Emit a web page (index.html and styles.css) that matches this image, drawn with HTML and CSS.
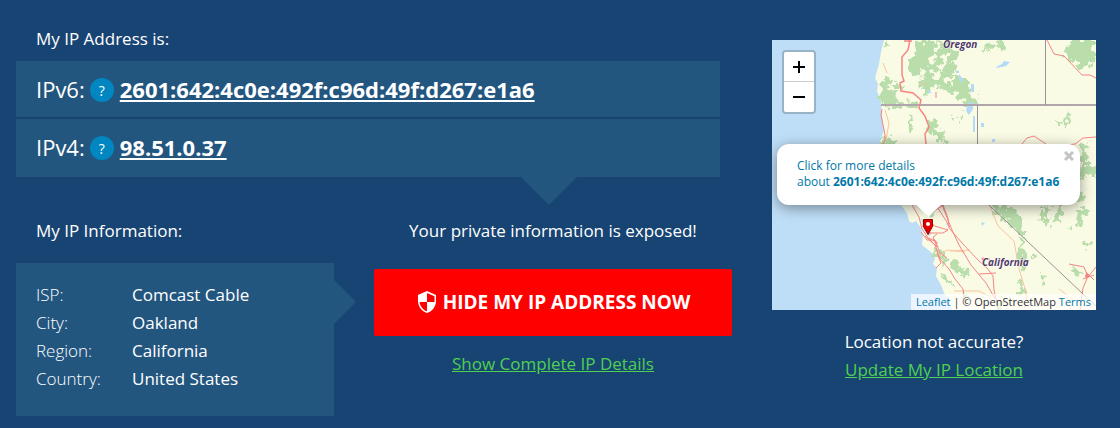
FILE: index.html
```html
<!DOCTYPE html>
<html lang="en">
<head>
    <meta charset="UTF-8">
    <meta name="viewport" content="width=device-width, initial-scale=1.0">
    <title>What Is My IP Address</title>
    <link rel="stylesheet" href="styles.css">
</head>
<body>
    <div class="container">
        <div class="main">
            <h1 class="heading">My IP Address is:</h1>
            <div class="ip-box">
                <div class="ip-row">
                    <span class="ip-label">IPv6:</span>
                    <button class="help" type="button">?</button>
                    <a class="ip" href="#ipv6">2601:642:4c0e:492f:c96d:49f:d267:e1a6</a>
                </div>
                <div class="ip-row">
                    <span class="ip-label">IPv4:</span>
                    <button class="help" type="button">?</button>
                    <a class="ip" href="#ipv4">98.51.0.37</a>
                </div>
            </div>
            <div class="columns">
                <div class="info">
                    <h2 class="heading">My IP Information:</h2>
                    <div class="info-box">
                        <table class="info-table">
                            <tr><th scope="row">ISP:</th><td>Comcast Cable</td></tr>
                            <tr><th scope="row">City:</th><td>Oakland</td></tr>
                            <tr><th scope="row">Region:</th><td>California</td></tr>
                            <tr><th scope="row">Country:</th><td>United States</td></tr>
                        </table>
                    </div>
                </div>
                <div class="action">
                    <p class="heading">Your private information is exposed!</p>
                    <button class="hide-btn" type="button">
                        <svg class="shield" viewBox="0 0 18 22">
                            <path fill="#fff" d="M9 0L0 4v6c0 5.500 3.800 10.600 9 12 5.200-1.400 9-6.500 9-12V4z"/>
                            <path fill="#f00" d="M9 2l7.500 3.300V11H9zM9 11v9.300C5 19 2.200 15.400 1.500 11z"/>
                        </svg>
                        HIDE MY IP ADDRESS NOW
                    </button>
                    <a class="green-link" href="#details">Show Complete IP Details</a>
                </div>
            </div>
        </div>
        <div class="side">
            <div class="map">
                <svg class="map-tiles" viewBox="0 0 324 270" preserveAspectRatio="xMidYMid slice">
                    <filter id="ragged" x="0" y="0" width="100%" height="100%" filterUnits="userSpaceOnUse">
                        <feTurbulence type="fractalNoise" baseFrequency="0.16" numOctaves="3" seed="4"/>
                        <feDisplacementMap in="SourceGraphic" scale="14" xChannelSelector="R" yChannelSelector="G"/>
                    </filter>
                    <rect width="324" height="270" fill="#bedef7"/>
                    <!-- land -->
                    <path fill="#fafbe4" d="M112 0L109 12 107 24 103 38 106 44 105 51 109 62 110 76 112 90 108 102 106 118 113 140 122 155 129 165 135 173 137 181 140 183 144 181 149 188 151 195 150 205 155 209 160 213 163 218 161 224 165 228 164 236 169 245 172 253 178 260 180 270H324V0z"/>
                    <!-- forests -->
                    <g fill="#b9ddab" filter="url(#ragged)">
                        <path d="M113 0l5 1 1 6-5 3-2-5zM150 2l10-2 4 5 7-5h4l5 6 6 4 1 6-6 4 3 10-4 4 6 3 10 2v6l4 6-5 3 5 4 5-2 1 5-8 2-5-5-7 1-4-5-12-2-1-5-6-1-5 9-8 1v-7l-4-3 2-10-12-3 0-8 3-8 5-4-2-10z"/>
                        <path d="M108 41l6-2 4 1 5-2-3 7 4 4-2 6 4 4-2 6-7 3-5-5-4 1-1-8 4-6zM114 63l10-2 8 2 9-2 6 3-4 4-13-2-8 3-8-2zM183 50l5 3 3-2 3 6 7 2 2 6-10-1-2-6-6 0zM209 11l8-8 6 1 6-4h6v8l-8 2-3-3-5 4-6-2-1 4z"/>
                        <path d="M292 12l6-9 4-3h20v17l-4 8-6 2-3 0-8-7-7-2zM136 76l4-2 2 4-3 4 3 6-3 5-3-8zM153 81l7-3 6 4-3 6 7 2 5 5-7 2-3-4-6 3zM111 99l7-3 6 5v6l-12 2zM165 91l6 0 3 8-3 7-6-5zM296 76l3-1-1 8-3 5-4-2zM284 83l6-1v3h-5z"/>
                        <path d="M309 106l6-4-3 12 5 2-5 9 8 0 4 3v9l-8-4-5 6-4 10 5 5-3 10-6-3 3-12zM220 166l18 1 7 5 1 5 6 3-3 7 5 5-3 5-7-7-5-1-1-6-6-1-4-6-6-1zM270 167l8-1-3 10 2 8-5 3 0-8-6 2zM284 167l7 1-4 14-6 3zM306 170l7-4 3 2-9 18-3-3zM247 196l5 3-1 9 2 12-3 13-3-5-2-16 2-5zM247 240l4-1 2 12-5 5zM298 226l8 3 3 7-5-1-5-4zM270 233l4 2-2 8-3-2z"/>
                        <path d="M150 168l8 1 5 6-5 2-5-2zM161 210l6 1 7 4 2 8-6-2-5-6-4-1zM178 220l6 2 4 7 7 2 2 6-7-1-5-4-6-4zM168 233l6 3 6 5 0 4-7-4zM183 228l12 4 4 5-8-1zM189 251l6 5 5 8-6-2-5-5zM220 262l8-4 6 5-5 5-8-1z"/>
                        <path d="M125 43l7 3-1 5-6 0zM182 75l3 4-3 2zM188 74l3 5-4 2zM298 185l5 3-2 5-5-2zM313 198l5 6-4 3zM260 212l4 2-1 6-3-2z"/>
                    </g>
                    <g fill="#fafbe4" filter="url(#ragged)">
                        <path d="M156 19l5-3 3 4-6 4zM170 14l6 3-4 13-4-2zM174 37h7v7h-8zM117 45l4 1-3 6-3-3zM149 28l5 1-2 9-4-2zM158 32l10-1 1 6-9 2zM164 3l4 2-2 8-3-2zM166 48l8 3-3 4-6-2z"/>
                    </g>
                    <!-- lakes and bays -->
                    <g fill="#b4dafa">
                        <path d="M224 27l6-3 2-3 6 1-4 4-9 2zM196 63l5-1v7l-4 6-3-4zM187 34l4 5-1 4-3-4zM199 44h3v8h-3zM155 49l5 4-4 0zM209 83h3v4h-3zM184 31h3v2h-3zM220 99h3v3h-3zM209 182l4 1-3 3zM201 76h2v16h-2zM149 179l6 2 1 8 4 4-3 3-5-6zM174 183l3 1-2 2z"/>
                    </g>
                    <!-- state borders -->
                    <g fill="none" stroke="#9c8f99" stroke-width="1">
                        <path stroke="#b0a6ac" stroke-width="2" d="M109 65H324"/>
                        <path d="M273.500 0V65M205.500 65V156L217 165 311 254 324 266"/>
                    </g>
                    <!-- minor roads -->
                    <g fill="none" stroke="#fac5a0" stroke-width="1">
                        <path d="M113 70l4 13-3 17M111 23l4 10M218 166l8 20 16 15 5 28 8 26-3 15M166 216l9-6 18 2M178 211l20-1M182 251h25l12 6M299 270l-4-15-8-6M149 45l5-3"/>
                    </g>
                    <!-- highways -->
                    <g fill="none" stroke="#f58585" stroke-width="1">
                        <path stroke-width="1.500" d="M138 0l-2 10-6 7 0 18 2 6-4 2 1 8 12 2 8 7-2 8 6 8 4 11-4 7 1 10M132 1l8 0"/>
                        <path d="M110 69l-1 6 4 20 0 6-4 5M275 0l7 14 10 2 18 19 8 0 6 3M250 104l5-6 7-2 12 8M295 105l8-1 8-6 13-1M164 52l0 6"/>
                        <path d="M140 165l7 12 3 12 7 10 6 6 5 14 9 10 6 10 8 10 3 18M155 176l16-11 5 13 1 10 14 16 15 16 10 9 5 7 1 14 6 28M170 165l10 25 7 15 12 20 15 18 11 19M156 184l20 6-5 3-14 0M149 187l7-4 6 2M149 192l6 8 8 0 5 13 7 5M153 196l12 11-4-10 4-3M178 187l-14-22M157 198l9 5M165 213l4 10-5 5M211 219l7 0M207 234l17-1M297 224l15 3 4 10 8-10M316 236l-5 12-3 22M311 239l11-4M314 232l8 8"/>
                    </g>
                    <g fill="#f58585"><circle cx="315" cy="236" r="2"/><circle cx="211" cy="219" r="1.500"/></g>
                    <text class="state" x="171" y="8">Oregon</text>
                    <text class="state" x="210" y="226">California</text>
                    <!-- marker -->
                    <path fill="#e00000" stroke="#a30000" d="M151.500 179.500h9v7l-4.500 8-4.500-8z"/>
                    <circle cx="156" cy="184" r="2" fill="#fff"/>
                </svg>
                <div class="zoom">
                    <button type="button" aria-label="Zoom in"><svg viewBox="0 0 12 12"><path d="M6 0v12M0 6h12"/></svg></button>
                    <button type="button" aria-label="Zoom out"><svg viewBox="0 0 12 12"><path d="M0 6h12"/></svg></button>
                </div>
                <div class="popup">
                    <a href="#details">Click for more details<br>about <b>2601:642:4c0e:492f:c96d:49f:d267:e1a6</b></a>
                    <button class="close" type="button" aria-label="Close"><svg viewBox="0 0 10 10"><path d="M1 1l8 8M9 1l-8 8"/></svg></button>
                </div>
                <div class="attribution"><a href="#leaflet">Leaflet</a> | © OpenStreetMap <a href="#terms">Terms</a></div>
            </div>
            <p class="accurate">Location not accurate?</p>
            <a class="green-link" href="#update">Update My IP Location</a>
        </div>
    </div>
</body>
</html>
```
FILE: styles.css
```css
* {
    box-sizing: border-box;
}
body {
    margin: 0;
    background: #174473;
    color: #fff;
    font-family: "Open Sans", sans-serif;
    font-size: 17px;
    line-height: 28px;
}
button {
    font-family: inherit;
    border: 0;
    padding: 0;
    cursor: pointer;
}
p {
    margin: 0;
}
.container {
    display: flex;
    gap: 40px;
    padding: 25px 24px 12px 16px;
}
.main {
    flex: 1;
}
.heading {
    margin: 0;
    font-size: 17px;
    font-weight: 500;
}
h1.heading,
h2.heading {
    padding-left: 20px;
}
.ip-box {
    position: relative;
    margin: 8px 12px 40px 0;
    background: #23567f;
}
.ip-box::after {
    content: "";
    position: absolute;
    top: 100%;
    left: 75.7%;
    width: 56px;
    height: 28px;
    margin-left: -28px;
    background: #23567f;
    clip-path: polygon(0 0, 100% 0, 50% 100%);
}
.ip-row {
    display: flex;
    align-items: center;
    padding: 14px 20px 16px;
    font-size: 22px;
}
.ip-row:first-child {
    padding-bottom: 14px;
    border-bottom: 2px solid #174473;
}
.help {
    width: 24px;
    height: 24px;
    margin: 2px 6px 0 5px;
    border-radius: 50%;
    background: #0087c1;
    color: #fff;
    font-size: 14px;
}
.ip {
    color: #fff;
    font-weight: 700;
}
.columns {
    display: grid;
    grid-template-columns: 318fr 358fr;
    gap: 40px;
}
.info-box {
    position: relative;
    margin-top: 18px;
    padding: 18px 20px 23px;
    background: #23567f;
}
.info-box::after {
    content: "";
    position: absolute;
    top: 17px;
    left: 100%;
    width: 22px;
    height: 44px;
    background: #23567f;
    clip-path: polygon(0 0, 100% 50%, 0 100%);
}
.info-table {
    border-collapse: collapse;
}
.info-table th,
.info-table td {
    padding: 0;
    text-align: left;
}
.info-table th {
    width: 96px;
    font-weight: 300;
}
.info-table td {
    font-weight: 500;
}
.action,
.side {
    display: flex;
    flex-direction: column;
    align-items: center;
}
.hide-btn {
    display: flex;
    justify-content: center;
    align-items: center;
    gap: 7px;
    width: 100%;
    margin: 24px 0 14px;
    padding: 19px 18px 20px 20px;
    border-radius: 2px;
    background: #f00;
    color: #fff;
    font-size: 19px;
    font-weight: 700;
    line-height: 28px;
}
.shield {
    width: 18px;
    height: 22px;
}
.green-link {
    color: #4fd04f;
}
.side {
    width: 324px;
    padding-top: 15px;
}
.map {
    position: relative;
    width: 100%;
    margin-bottom: 18px;
    overflow: hidden;
    font-size: 12px;
    line-height: 16px;
}
.map a {
    color: #0078a8;
    text-decoration: none;
}
.map-tiles {
    display: block;
    width: 100%;
}
.state {
    fill: #523a66;
    stroke: #fff;
    stroke-width: 1px;
    paint-order: stroke;
    font-size: 10px;
    font-weight: 700;
    font-style: italic;
}
.zoom {
    position: absolute;
    top: 10px;
    left: 10px;
    border: 2px solid #98b2c6;
    border-radius: 4px;
}
.zoom button {
    display: grid;
    place-items: center;
    width: 30px;
    height: 30px;
    background: #fff;
    border-radius: 0 0 2px 2px;
}
.zoom button:first-child {
    border-bottom: 1px solid #ccc;
    border-radius: 2px 2px 0 0;
}
.zoom svg {
    width: 12px;
    height: 12px;
    stroke: #000;
    stroke-width: 2;
}
.popup {
    position: absolute;
    top: 104px;
    left: 5px;
    right: 16px;
    padding: 14px 20px 15px;
    border-radius: 12px;
    background: #fff;
    box-shadow: 0 3px 14px rgba(0, 0, 0, 0.4);
    white-space: nowrap;
}
.popup::after {
    content: "";
    position: absolute;
    top: 100%;
    left: 50%;
    width: 24px;
    height: 12px;
    margin-left: -12px;
    background: #fff;
    clip-path: polygon(0 0, 100% 0, 50% 100%);
}
.close {
    position: absolute;
    top: 7px;
    right: 6px;
    width: 10px;
    height: 10px;
    background: none;
}
.close svg {
    display: block;
    stroke: #c3c3c3;
    stroke-width: 3;
}
.attribution {
    position: absolute;
    right: 0;
    bottom: 0;
    padding: 0 5px;
    background: rgba(255, 255, 255, 0.7);
    color: #333;
    font-size: 11px;
}
.accurate {
    font-weight: 500;
}
```
